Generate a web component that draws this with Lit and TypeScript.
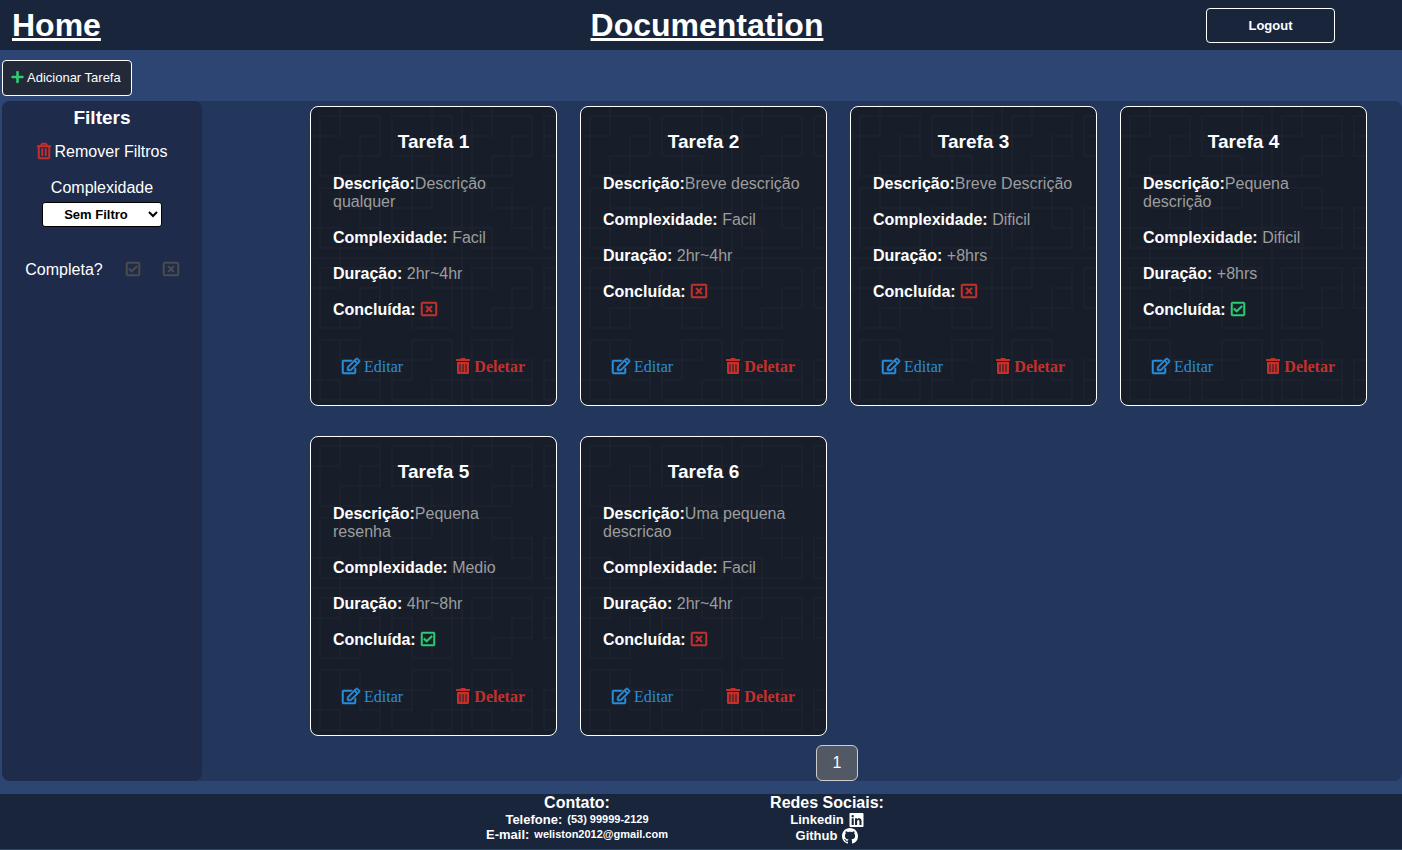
import { LitElement, html, css, svg } from "lit";
import { customElement, property, state } from "lit/decorators.js";
import { classMap } from "lit/directives/class-map.js";

interface Task {
  id: number;
  title: string;
  description: string;
  complexity: string;
  duration: string;
  done: boolean;
}

const TASKS: Task[] = [
  { id: 1, title: "Tarefa 1", description: "Descrição qualquer", complexity: "Facil", duration: "2hr~4hr", done: false },
  { id: 2, title: "Tarefa 2", description: "Breve descrição", complexity: "Facil", duration: "2hr~4hr", done: false },
  { id: 3, title: "Tarefa 3", description: "Breve Descrição", complexity: "Dificil", duration: "+8hrs", done: false },
  { id: 4, title: "Tarefa 4", description: "Pequena descrição", complexity: "Dificil", duration: "+8hrs", done: true },
  { id: 5, title: "Tarefa 5", description: "Pequena resenha", complexity: "Medio", duration: "4hr~8hr", done: true },
  { id: 6, title: "Tarefa 6", description: "Uma pequena descricao", complexity: "Facil", duration: "2hr~4hr", done: false },
];

const ICONS: Record<string, { box: string; d: string }> = {
  plus: {
    box: "0 0 448 512",
    d: "M416 208H272V64c0-17.67-14.33-32-32-32h-32c-17.67 0-32 14.33-32 32v144H32c-17.67 0-32 14.33-32 32v32c0 17.67 14.33 32 32 32h144v144c0 17.67 14.33 32 32 32h32c17.67 0 32-14.33 32-32V304h144c17.67 0 32-14.33 32-32v-32c0-17.67-14.33-32-32-32z",
  },
  trashOutline: {
    box: "0 0 448 512",
    d: "M268 416h24a12 12 0 0 0 12-12V188a12 12 0 0 0-12-12h-24a12 12 0 0 0-12 12v216a12 12 0 0 0 12 12zM432 80h-82.41l-34-56.7A48 48 0 0 0 274.41 0H173.59a48 48 0 0 0-41.16 23.3L98.41 80H16A16 16 0 0 0 0 96v16a16 16 0 0 0 16 16h16v336a48 48 0 0 0 48 48h288a48 48 0 0 0 48-48V128h16a16 16 0 0 0 16-16V96a16 16 0 0 0-16-16zM171.84 50.91A6 6 0 0 1 177 48h94a6 6 0 0 1 5.15 2.91L293.61 80H154.39zM368 464H80V128h288zm-212-48h24a12 12 0 0 0 12-12V188a12 12 0 0 0-12-12h-24a12 12 0 0 0-12 12v216a12 12 0 0 0 12 12z",
  },
  trash: {
    box: "0 0 448 512",
    d: "M32 464a48 48 0 0 0 48 48h288a48 48 0 0 0 48-48V128H32zm272-256a16 16 0 0 1 32 0v224a16 16 0 0 1-32 0zm-96 0a16 16 0 0 1 32 0v224a16 16 0 0 1-32 0zm-96 0a16 16 0 0 1 32 0v224a16 16 0 0 1-32 0zM432 32H312l-9.4-18.7A24 24 0 0 0 281.1 0H166.8a23.72 23.72 0 0 0-21.4 13.3L136 32H16A16 16 0 0 0 0 48v32a16 16 0 0 0 16 16h416a16 16 0 0 0 16-16V48a16 16 0 0 0-16-16z",
  },
  edit: {
    box: "0 0 576 512",
    d: "M402.3 344.9l32-32c5-5 13.7-1.5 13.7 5.7V464c0 26.5-21.5 48-48 48H48c-26.5 0-48-21.5-48-48V112c0-26.5 21.5-48 48-48h273.5c7.1 0 10.7 8.6 5.7 13.7l-32 32c-1.5 1.5-3.5 2.3-5.7 2.3H48v352h352V350.5c0-2.1.8-4.1 2.3-5.6zm156.6-201.8L296.3 405.7l-90.4 10c-26.2 2.9-48.5-19.2-45.6-45.6l10-90.4L432.9 17.1c22.9-22.9 59.9-22.9 82.7 0l43.2 43.2c22.9 22.9 22.9 60 .1 82.8zM460.1 174L402 115.9 216.2 301.8l-7.3 65.3 65.3-7.3L460.1 174zm64.8-79.7l-43.2-43.2c-4.1-4.1-10.8-4.1-14.8 0L436 82l58.1 58.1 30.9-30.9c4-4.2 4-10.8-.1-14.9z",
  },
  check: {
    box: "0 0 448 512",
    d: "M400 32H48C21.49 32 0 53.49 0 80v352c0 26.51 21.49 48 48 48h352c26.51 0 48-21.49 48-48V80c0-26.51-21.49-48-48-48zm0 400H48V80h352v352zm-35.864-241.724L191.547 361.48c-4.705 4.667-12.303 4.637-16.97-.068l-90.781-91.516c-4.667-4.705-4.637-12.303.069-16.971l22.719-22.536c4.705-4.667 12.303-4.637 16.97.069l59.792 60.277 141.352-140.216c4.705-4.667 12.303-4.637 16.97.068l22.536 22.718c4.667 4.706 4.637 12.304-.068 16.971z",
  },
  close: {
    box: "0 0 512 512",
    d: "M464 32H48C21.5 32 0 53.5 0 80v352c0 26.5 21.5 48 48 48h416c26.5 0 48-21.5 48-48V80c0-26.5-21.5-48-48-48zm0 394c0 3.3-2.7 6-6 6H54c-3.3 0-6-2.7-6-6V86c0-3.3 2.7-6 6-6h404c3.3 0 6 2.7 6 6v340zM356.5 194.6L295.1 256l61.4 61.4c4.6 4.6 4.6 12.1 0 16.8l-22.3 22.3c-4.6 4.6-12.1 4.6-16.8 0L256 295.1l-61.4 61.4c-4.6 4.6-12.1 4.6-16.8 0l-22.3-22.3c-4.6-4.6-4.6-12.1 0-16.8l61.4-61.4-61.4-61.4c-4.6-4.6-4.6-12.1 0-16.8l22.3-22.3c4.6-4.6 12.1-4.6 16.8 0l61.4 61.4 61.4-61.4c4.6-4.6 12.1-4.6 16.8 0l22.3 22.3c4.7 4.6 4.7 12.1 0 16.8z",
  },
  linkedin: {
    box: "0 0 448 512",
    d: "M416 32H31.9C14.3 32 0 46.5 0 64.3v383.4C0 465.5 14.3 480 31.9 480H416c17.6 0 32-14.5 32-32.3V64.3c0-17.8-14.4-32.3-32-32.3zM135.4 416H69V202.2h66.5V416zm-33.2-243c-21.3 0-38.5-17.3-38.5-38.5S80.9 96 102.2 96c21.2 0 38.5 17.3 38.5 38.5 0 21.3-17.2 38.5-38.5 38.5zm282.1 243h-66.4V312c0-24.8-.5-56.7-34.5-56.7-34.6 0-39.9 27-39.9 54.9V416h-66.4V202.2h63.7v29.2h.9c8.9-16.8 30.6-34.5 62.9-34.5 67.2 0 79.7 44.3 79.7 101.9V416z",
  },
  github: {
    box: "0 0 16 16",
    d: "M8 0C3.58 0 0 3.58 0 8c0 3.54 2.29 6.53 5.47 7.59.4.07.55-.17.55-.38 0-.19-.01-.82-.01-1.49-2.01.37-2.53-.49-2.69-.94-.09-.23-.48-.94-.82-1.13-.28-.15-.68-.52-.01-.53.63-.01 1.08.58 1.23.82.72 1.21 1.87.87 2.33.66.07-.52.28-.87.51-1.07-1.78-.2-3.64-.89-3.64-3.95 0-.87.31-1.59.82-2.15-.08-.2-.36-1.02.08-2.12 0 0 .67-.21 2.2.82.64-.18 1.32-.27 2-.27.68 0 1.36.09 2 .27 1.53-1.04 2.2-.82 2.2-.82.44 1.1.16 1.92.08 2.12.51.56.82 1.27.82 2.15 0 3.07-1.87 3.75-3.65 3.95.29.25.54.73.54 1.48 0 1.07-.01 1.93-.01 2.2 0 .21.15.46.55.38A8.013 8.013 0 0016 8c0-4.42-3.58-8-8-8z",
  },
};

const icon = (name: string) => html`<svg class="icon ${name}" viewBox=${ICONS[name].box} aria-hidden="true">
  ${svg`<path fill="currentColor" d=${ICONS[name].d}></path>`}
</svg>`;

const iconStyles = css`
  .icon {
    display: block;
    flex: none;
    width: 16px;
    height: 16px;
    overflow: visible;
  }
  .check,
  .close,
  .edit,
  .trashOutline {
    stroke: currentColor;
    stroke-width: 16;
  }
`;

@customElement("task-card")
export class TaskCard extends LitElement {
  @property({ attribute: false }) task!: Task;

  static styles = [
    iconStyles,
    css`
      :host {
        display: block;
      }
      .card {
        box-sizing: border-box;
        display: flex;
        flex-direction: column;
        gap: 18px;
        height: 100%;
        min-height: 300px;
        padding: 24px 22px 29px;
        border: 1px solid #fff;
        border-radius: 8px;
        color: #fff;
        background-color: #171e2a;
        background-image: url("data:image/svg+xml,%3Csvg xmlns='http://www.w3.org/2000/svg' width='152' height='152' viewBox='0 0 152 152'%3E%3Cpath fill='%231b222d' fill-rule='evenodd' d='M152 150v2H0v-2h28v-8H8v-20H0v-2h8V80h42v20h20v42H30v8h90v-8H80v-42h20V80h42v40h8V30h-8v40h-42V50H80V8h40V0h2v8h20v20h8V0h2v150zm-2 0v-28h-8v20h-20v8h28zM82 30v18h18V30H82zm20 18h20v20h18V30h-20V10H82v18h20v20zm0 2v18h18V50h-18zm20-22h18V10h-18v18zm-54 92v-18H50v18h18zm-20-18H28V82H10v38h20v20h38v-18H48v-20zm0-2V82H30v18h18zm-20 22H10v18h18v-18zm54 0v18h38v-20h20V82h-18v20h-20v20H82zm18-20H82v18h18v-18zm2-2h18V82h-18v18zm20 40v-18h18v18h-18zM30 0h-2v8H8v20H0v2h8v40h42V50h20V8H30V0zm20 48h18V30H50v18zm18-20H48v20H28v20H10V30h20V10h38v18zM30 50h18v18H30V50zm-2-40H10v18h18V10z'/%3E%3C/svg%3E");
      }
      .title {
        margin: 0 0 4px;
        font-size: 19px;
        line-height: 22px;
        text-align: center;
      }
      .row {
        margin: 0;
        font-size: 16px;
        line-height: 18px;
        color: #9d9d9d;
      }
      .row strong {
        color: #fff;
      }
      .status {
        display: flex;
        align-items: flex-start;
        gap: 5px;
      }
      .status .icon {
        color: #c5302b;
      }
      .status .check {
        width: 14px;
        color: #2ecc71;
      }
      .actions {
        display: flex;
        justify-content: space-between;
        margin-top: auto;
        padding: 0 9px;
      }
      .action {
        display: flex;
        align-items: flex-start;
        gap: 4px;
        padding: 0;
        border: 0;
        background: none;
        font-family: "Liberation Serif", "Times New Roman", serif;
        font-size: 16px;
        line-height: 18px;
        cursor: pointer;
      }
      .action .edit {
        width: 18px;
      }
      .action .trash {
        width: 14px;
      }
      .blue {
        color: #2a8ddb;
      }
      .red {
        color: #c5302b;
        font-weight: 700;
      }
    `,
  ];

  render() {
    const t = this.task;
    return html`
      <article class="card">
        <h3 class="title">${t.title}</h3>
        <p class="row"><strong>Descrição:</strong>${t.description}</p>
        <p class="row"><strong>Complexidade:</strong> ${t.complexity}</p>
        <p class="row"><strong>Duração:</strong> ${t.duration}</p>
        <p class="row status"><strong>Concluída:</strong>${icon(t.done ? "check" : "close")}</p>
        <div class="actions">
          <button class="action blue" type="button">${icon("edit")}Editar</button>
          <button class="action red" type="button">${icon("trash")}Deletar</button>
        </div>
      </article>
    `;
  }
}

@customElement("app-root")
export class AppRoot extends LitElement {
  @state() private complexity = "";
  @state() private done: boolean | null = null;

  static styles = [
    iconStyles,
    css`
      :host {
        box-sizing: border-box;
        display: flex;
        flex-direction: column;
        min-height: 100vh;
        padding-bottom: 1px;
        background: #2c4572;
        color: #fff;
        font-family: "Liberation Sans", Arial, sans-serif;
        font-size: 16px;
        line-height: 18px;
      }
      a {
        color: inherit;
      }
      button,
      select {
        font-family: inherit;
        font-size: 13px;
      }
      .header {
        display: grid;
        grid-template-columns: 1fr auto 1fr;
        align-items: center;
        height: 50px;
        padding-left: 12px;
        background: #19253b;
      }
      .nav {
        justify-self: start;
        font-size: 32px;
        line-height: 36px;
        font-weight: 700;
      }
      .logout {
        justify-self: end;
        width: 129px;
        height: 35px;
        margin-right: 67px;
        border: 1px solid #fff;
        border-radius: 4px;
        background: none;
        color: #fff;
        font-weight: 700;
        cursor: pointer;
      }
      .toolbar {
        display: flex;
        padding: 10px 2px 5px;
      }
      .add {
        display: flex;
        align-items: center;
        gap: 3px;
        height: 36px;
        padding: 0 10px 2px 8px;
        border: 1px solid #fff;
        border-radius: 4px;
        background: #222938;
        color: #fff;
        cursor: pointer;
      }
      .plus {
        width: 13px;
        height: 14px;
        color: #2ecc71;
      }
      .main {
        flex: 1;
        display: flex;
        margin-left: 2px;
        border-radius: 8px;
        background: #23365c;
      }
      .filters {
        box-sizing: border-box;
        display: flex;
        flex-direction: column;
        align-items: center;
        flex: none;
        width: 200px;
        padding-top: 6px;
        border-radius: 8px;
        background: #1e2b4a;
      }
      .filters-title {
        margin: 0 0 14px;
        font-size: 19px;
        line-height: 22px;
      }
      .clear {
        display: flex;
        align-items: flex-start;
        gap: 4px;
        margin-bottom: 18px;
        padding: 0;
        border: 0;
        background: none;
        color: #fff;
        font-size: 16px;
        line-height: 18px;
        cursor: pointer;
      }
      .trashOutline {
        width: 14px;
        color: #c5302b;
      }
      .select {
        width: 120px;
        height: 25px;
        margin: 5px 0 34px;
        border: 1px solid #000;
        border-radius: 3px;
        background: #fff;
        color: #000;
        font-weight: 700;
        text-align: center;
      }
      .complete {
        display: flex;
        align-items: flex-start;
      }
      .toggle {
        display: flex;
        padding: 0;
        margin-left: 23px;
        border: 0;
        background: none;
        color: #4d4d4d;
        cursor: pointer;
      }
      .toggle .check {
        width: 14px;
      }
      .toggle.on {
        color: #fff;
      }
      .content {
        flex: 1;
        display: flex;
        flex-direction: column;
        align-items: center;
        padding: 5px 0 0 70px;
      }
      .cards {
        align-self: stretch;
        display: grid;
        grid-template-columns: repeat(auto-fill, 247px);
        gap: 30px 23px;
        padding: 0 35px 0 38px;
      }
      .page {
        width: 42px;
        height: 36px;
        margin-top: 9px;
        padding: 0;
        border: 1px solid #ccc;
        border-radius: 6px;
        background: #525864;
        color: #fff;
        font-size: 16px;
        cursor: pointer;
      }
      .footer {
        display: flex;
        justify-content: center;
        height: 55px;
        margin-top: 13px;
        padding-left: 2px;
        background: #19253b;
        font-weight: 700;
      }
      .col {
        display: flex;
        flex-direction: column;
        align-items: center;
        width: 250px;
        font-size: 13px;
        line-height: 16px;
      }
      .contact {
        line-height: 15px;
      }
      .col-title {
        margin: 0;
        font-size: 16px;
        line-height: 18px;
      }
      .line {
        display: flex;
        align-items: center;
        gap: 5px;
        text-decoration: none;
      }
      .small {
        font-size: 11px;
      }
      .linkedin {
        width: 15px;
      }
    `,
  ];

  private toggleDone(value: boolean) {
    this.done = this.done === value ? null : value;
  }

  private clearFilters() {
    this.complexity = "";
    this.done = null;
  }

  render() {
    const tasks = TASKS.filter(
      (t) => (!this.complexity || t.complexity === this.complexity) && (this.done === null || t.done === this.done)
    );
    return html`
      <header class="header">
        <a class="nav" href="#home">Home</a>
        <a class="nav" href="#documentation">Documentation</a>
        <button class="logout" type="button">Logout</button>
      </header>
      <div class="toolbar">
        <button class="add" type="button">${icon("plus")}Adicionar Tarefa</button>
      </div>
      <main class="main">
        <aside class="filters">
          <h2 class="filters-title">Filters</h2>
          <button class="clear" type="button" @click=${this.clearFilters}>${icon("trashOutline")}Remover Filtros</button>
          <label for="complexity">Complexidade</label>
          <select
            id="complexity"
            class="select"
            .value=${this.complexity}
            @change=${(e: Event) => (this.complexity = (e.target as HTMLSelectElement).value)}
          >
            <option value="">Sem Filtro</option>
            <option value="Facil">Facil</option>
            <option value="Medio">Medio</option>
            <option value="Dificil">Dificil</option>
          </select>
          <div class="complete" role="group" aria-labelledby="complete-label">
            <span id="complete-label">Completa?</span>
            <button
              class=${classMap({ toggle: true, on: this.done === true })}
              type="button"
              aria-label="Sim"
              @click=${() => this.toggleDone(true)}
            >
              ${icon("check")}
            </button>
            <button
              class=${classMap({ toggle: true, on: this.done === false })}
              type="button"
              aria-label="Não"
              @click=${() => this.toggleDone(false)}
            >
              ${icon("close")}
            </button>
          </div>
        </aside>
        <section class="content">
          <div class="cards">${tasks.map((t) => html`<task-card .task=${t}></task-card>`)}</div>
          <button class="page" type="button">1</button>
        </section>
      </main>
      <footer class="footer">
        <section class="col contact">
          <h4 class="col-title">Contato:</h4>
          <div class="line">Telefone: <span class="small">(53) 99999-2129</span></div>
          <div class="line">E-mail: <span class="small">weliston2012@gmail.com</span></div>
        </section>
        <section class="col">
          <h4 class="col-title">Redes Sociais:</h4>
          <a class="line" href="#linkedin">Linkedin ${icon("linkedin")}</a>
          <a class="line" href="#github">Github ${icon("github")}</a>
        </section>
      </footer>
    `;
  }
}
